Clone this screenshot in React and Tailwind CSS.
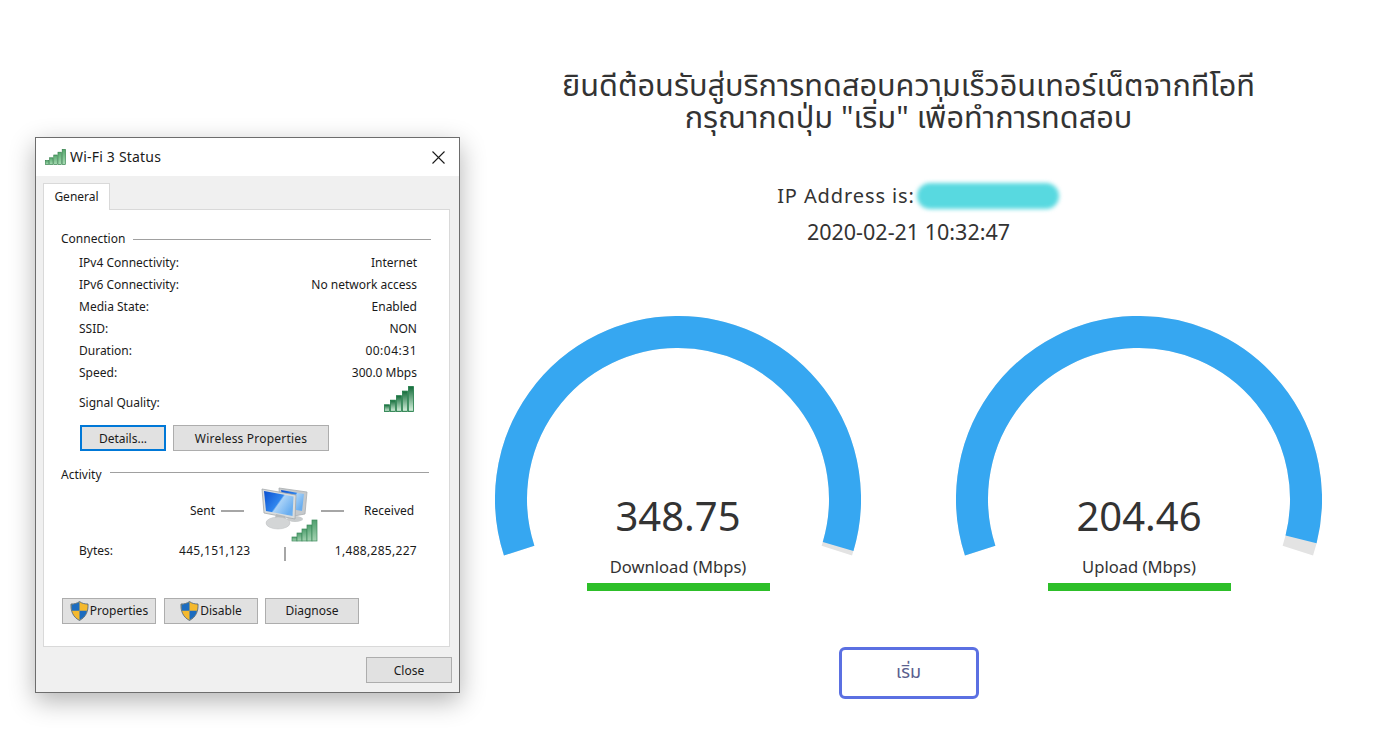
const WEB_FONT = "font-['Noto_Sans','Noto_Sans_Thai','DejaVu_Sans',sans-serif]"

const ROWS = [
  ['IPv4 Connectivity:', 'Internet', ''],
  ['IPv6 Connectivity:', 'No network access', ''],
  ['Media State:', 'Enabled', ''],
  ['SSID:', 'NON', ''],
  ['Duration:', '00:04:31', 'tracking-[0.5px]'],
  ['Speed:', '300.0 Mbps', ''],
]

function SignalBars({ id, className, outline = '#2f7f4f', top = '#2f8a55', bottom = '#c9ecd3' }) {
  const bars = [
    { x: 0.5, h: 5 },
    { x: 6.5, h: 8.5 },
    { x: 12.5, h: 12 },
    { x: 18.5, h: 15.5 },
    { x: 24.5, h: 19 },
  ]
  return (
    <svg className={className} viewBox="0 0 30 20" preserveAspectRatio="none">
      <defs>
        <linearGradient id={id} x1="0" y1="0" x2="0" y2="1">
          <stop offset="0" stopColor={top} />
          <stop offset="1" stopColor={bottom} />
        </linearGradient>
      </defs>
      {bars.map(b => (
        <rect key={b.x} x={b.x} y={19.5 - b.h} width="5" height={b.h} fill={`url(#${id})`} stroke={outline} strokeWidth="0.8" />
      ))}
    </svg>
  )
}

function Shield() {
  return (
    <svg className="w-[19px] h-[20px] shrink-0" viewBox="0 0 19 20">
      <path d="M9.5 0.5C7 2.5 4 3 1 3C0.5 10 3 16 9.5 19.5C16 16 18.5 10 18 3C15 3 12 2.5 9.5 0.5Z" fill="#f5b92e" stroke="#47607c" strokeWidth="0.8" />
      <path d="M9.5 1C7 2.8 4.2 3.3 1.4 3.4C1.3 5.6 1.5 7.7 2.1 9.8H9.5Z" fill="#1c6cc0" />
      <path d="M9.5 9.8H17C16 14 13.6 17 9.5 19.1Z" fill="#1c6cc0" />
    </svg>
  )
}

function Computers() {
  return (
    <svg className="w-[60px] h-[56px] shrink-0" viewBox="0 0 60 56">
      <defs>
        <linearGradient id="screen" x1="0" y1="0" x2="1" y2="0.6">
          <stop offset="0" stopColor="#0a4fd0" />
          <stop offset="0.55" stopColor="#2f86ee" />
          <stop offset="0.6" stopColor="#a9d2f7" />
          <stop offset="1" stopColor="#6aaef0" />
        </linearGradient>
        <linearGradient id="netbars" x1="0" y1="0" x2="0" y2="1">
          <stop offset="0" stopColor="#4f9f6e" />
          <stop offset="1" stopColor="#a5d3b2" />
        </linearGradient>
      </defs>
      <path d="M19 1L47 5L45 27L34 29L20 24Z" fill="#c5c9cc" stroke="#a9adb0" strokeWidth="0.8" />
      <path d="M21 3L44 7L42 24L25 21Z" fill="url(#screen)" />
      <ellipse cx="35" cy="32" rx="8" ry="3" fill="#c9cccd" />
      <path d="M2 2L36 8L35 32L4 26Z" fill="#d9dcdd" stroke="#a4a8ab" strokeWidth="0.8" />
      <path d="M4 4L33.5 9.5L32.5 29L6 24Z" fill="url(#screen)" />
      <path d="M16 27L25 29L26 33L15 31Z" fill="#b8bbbc" />
      <ellipse cx="18" cy="36" rx="12" ry="6" fill="#d3d5d6" stroke="#bcbfc0" strokeWidth="0.5" />
      {[
        [32, 50, 4],
        [37, 46, 8],
        [42, 42, 12],
        [47, 38, 16],
        [52, 33, 21],
      ].map(([x, y, h]) => (
        <rect key={x} x={x} y={y} width="5" height={h} fill="url(#netbars)" stroke="#3d8a5c" strokeWidth="0.7" />
      ))}
    </svg>
  )
}

function WinButton({ className = '', children, focused }) {
  return (
    <div className={`h-[26px] flex items-center justify-center bg-[#e1e1e1] border text-[12px] text-[#1a1a1a] ${focused ? 'border-2 border-[#0078d7]' : 'border-[#adadad]'} ${className}`}>
      {children}
    </div>
  )
}

function GroupTitle({ label, className = '' }) {
  return (
    <div className={`flex items-center gap-[8px] h-[16px] text-[12px] ${className}`}>
      <span>{label}</span>
      <span className="flex-1 h-px bg-[#a0a0a0]" />
    </div>
  )
}

function StatusDialog() {
  return (
    <div className="w-[425px] h-[556px] shrink-0 flex flex-col bg-[#f0f0f0] border border-[#6d6d6d] shadow-[0_8px_24px_rgba(0,0,0,0.3)] text-[#1a1a1a] font-['Noto_Sans',sans-serif]">
      <div className="h-[38px] bg-white flex items-center pl-[9px] pr-[14px] shrink-0">
        <SignalBars id="titlebars" className="w-[21px] h-[16px]" outline="#2d7a45" top="#55a86c" bottom="#a8dcb4" />
        <span className="ml-[4px] -mt-[2px] text-[14px] tracking-[0.2px]">Wi-Fi 3 Status</span>
        <svg className="ml-auto w-[13px] h-[13px]" viewBox="0 0 13 13">
          <path d="M0.5 0.5L12.5 12.5M12.5 0.5L0.5 12.5" stroke="#1a1a1a" strokeWidth="1.1" />
        </svg>
      </div>

      <div className="pl-[7px] pt-[7px] pr-[9px]">
        <div className="w-[67px] h-[27px] -mb-px relative z-10 bg-white border border-[#d9d9d9] border-b-0 flex items-center justify-center text-[12px]">
          General
        </div>
        <div className="h-[438px] bg-white border border-[#d9d9d9] pt-[21px]">
          <GroupTitle label="Connection" className="ml-[17px] mr-[18px]" />
          <div className="mt-[5px] ml-[35px] mr-[32px] text-[12px]">
            {ROWS.map(([label, value, extra]) => (
              <div key={label} className="h-[22px] flex items-center justify-between">
                <span>{label}</span>
                <span className={extra}>{value}</span>
              </div>
            ))}
            <div className="h-[38px] flex items-center justify-between">
              <span>Signal Quality:</span>
              <SignalBars id="qualitybars" className="w-[30px] h-[26px] mr-[3px] -mt-[9px]" outline="#1f7a46" top="#146b3a" bottom="#d8f3df" />
            </div>
          </div>
          <div className="flex gap-[7px] ml-[36px] mt-[3px]">
            <WinButton focused className="w-[86px] pt-px">Details...</WinButton>
            <WinButton className="w-[156px] pt-px tracking-[0.2px]">Wireless Properties</WinButton>
          </div>
          <GroupTitle label="Activity" className="ml-[17px] mr-[20px] mt-[15px] items-start [&>span:last-child]:mt-[6px]" />
          <div className="ml-[35px] mr-[32px] text-[12px]">
            <div className="flex items-start h-[55px] mt-[5px] -mb-[2px]">
              <span className="ml-[111px] mt-[15px]">Sent</span>
              <span className="ml-[6px] mt-[23px] w-[23px] h-[2px] bg-[#a6a6a6]" />
              <div className="ml-[16px]"><Computers /></div>
              <span className="ml-[1px] mt-[23px] w-[23px] h-[2px] bg-[#a6a6a6]" />
              <span className="ml-[20px] mt-[15px]">Received</span>
            </div>
            <div className="flex items-start h-[24px]">
              <span className="mt-[2px] w-[100px]">Bytes:</span>
              <span className="mt-[2px] w-[71px] tracking-[0.3px] whitespace-nowrap">445,151,123</span>
              <span className="ml-[34px] mt-[7px] w-[2px] h-[14px] bg-[#a6a6a6]" />
              <span className="mt-[2px] ml-auto tracking-[0.3px]">1,488,285,227</span>
            </div>
          </div>
          <div className="flex ml-[18px] mt-[34px]">
            <WinButton className="w-[94px]"><Shield /><span className="ml-px">Properties</span></WinButton>
            <WinButton className="w-[94px] ml-[8px]"><Shield /><span className="ml-px">Disable</span></WinButton>
            <WinButton className="w-[94px] ml-[7px]">Diagnose</WinButton>
          </div>
        </div>
      </div>
      <div className="flex justify-end pr-[7px] mt-[10px]">
        <WinButton className="w-[86px] pt-px">Close</WinButton>
      </div>
    </div>
  )
}

function arcPoint(angle, r) {
  const rad = (angle * Math.PI) / 180
  return [183 + r * Math.cos(rad), 183 + r * Math.sin(rad)]
}

function arcPath(from, to) {
  const r = 167
  const [x1, y1] = arcPoint(from, r)
  const [x2, y2] = arcPoint(to, r)
  const large = to - from > 180 ? 1 : 0
  return `M${x1} ${y1}A${r} ${r} 0 ${large} 1 ${x2} ${y2}`
}

// the dial runs from 162deg round the top to 378deg
function Gauge({ value, label, end }) {
  return (
    <div className="relative w-[366px] h-[276px]">
      <svg className="w-[366px] h-[250px]" viewBox="0 0 366 250">
        <path d={arcPath(162, 378)} fill="none" stroke="#e3e3e3" strokeWidth="32" />
        <path d={arcPath(162, end)} fill="none" stroke="#36a7f1" strokeWidth="32" />
      </svg>
      <div className="absolute left-0 right-0 top-[173px] flex flex-col items-center">
        <div className="h-[54px] leading-[54px] text-[40px] text-[#333]">{value}</div>
        <div className="h-[24px] mt-[12px] leading-[24px] text-[16.6px] text-[#333]">{label}</div>
        <div className="w-[183px] h-[8px] mt-[4px] bg-[#2dbf29]" />
      </div>
    </div>
  )
}

export default function App() {
  return (
    <div className="w-[1394px] h-[738px] overflow-hidden bg-white flex items-start">
      <div className="ml-[35px] mt-[137px]">
        <StatusDialog />
      </div>
      <main className={`ml-[35px] w-[827px] flex flex-col items-center pt-[68px] text-[#333] ${WEB_FONT}`}>
        <h1 className="text-center text-[30.7px] leading-[32px] whitespace-nowrap">
          <div>ยินดีต้อนรับสู่บริการทดสอบความเร็วอินเทอร์เน็ตจากทีโอที</div>
          <div>กรุณากดปุ่ม "เริ่ม" เพื่อทำการทดสอบ</div>
        </h1>
        <div className="mt-[49px] h-[30px] flex items-center text-[20px] tracking-[0.9px] ml-[19px]">
          <span>IP Address is:</span>
          <span className="ml-[2px] w-[142px] h-[26px] rounded-full bg-[#58d9e0] blur-[2px]" />
        </div>
        <div className="mt-[6px] h-[30px] leading-[30px] text-[21.5px]">2020-02-21 10:32:47</div>
        <div className="mt-[69px] w-full flex justify-between">
          <Gauge value="348.75" label="Download (Mbps)" end={376.5} />
          <Gauge value="204.46" label="Upload (Mbps)" end={374} />
        </div>
        <div className="mt-[55px] w-[140px] h-[52px] pb-[4px] border-[3px] border-[#5b70e2] rounded-[6px] flex items-center justify-center text-[18px] text-[#5a5f8e]">
          เริ่ม
        </div>
      </main>
    </div>
  )
}
